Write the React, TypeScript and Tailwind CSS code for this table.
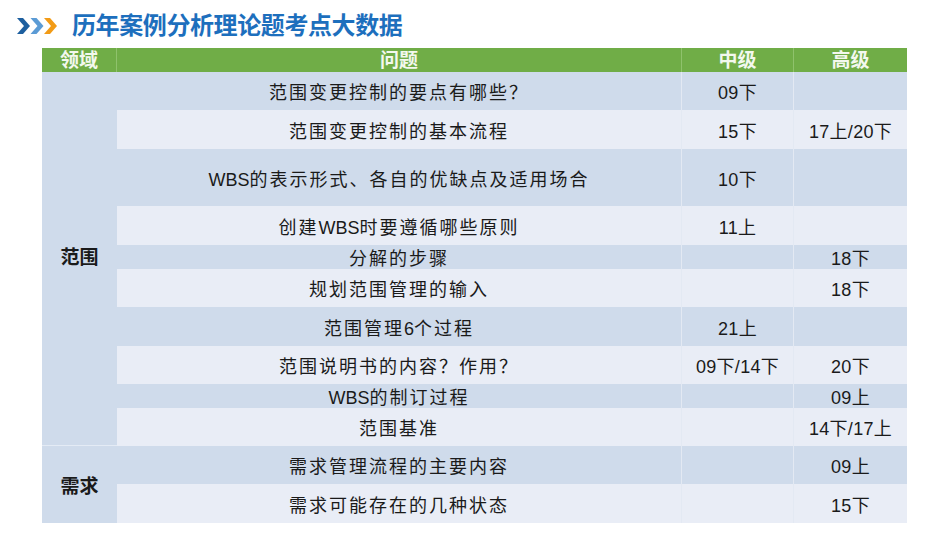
const rows: { q: string; mid: string; high: string; dark: boolean }[] = [
  { q: "范围变更控制的要点有哪些？", mid: "09下", high: "", dark: true },
  { q: "范围变更控制的基本流程", mid: "15下", high: "17上/20下", dark: false },
  { q: "WBS的表示形式、各自的优缺点及适用场合", mid: "10下", high: "", dark: true },
  { q: "创建WBS时要遵循哪些原则", mid: "11上", high: "", dark: false },
  { q: "分解的步骤", mid: "", high: "18下", dark: true },
  { q: "规划范围管理的输入", mid: "", high: "18下", dark: false },
  { q: "范围管理6个过程", mid: "21上", high: "", dark: true },
  { q: "范围说明书的内容？作用？", mid: "09下/14下", high: "20下", dark: false },
  { q: "WBS的制订过程", mid: "", high: "09上", dark: true },
  { q: "范围基准", mid: "", high: "14下/17上", dark: false },
  { q: "需求管理流程的主要内容", mid: "", high: "09上", dark: true },
  { q: "需求可能存在的几种状态", mid: "", high: "15下", dark: false },
];

// letter spacing only on the CJK runs, Latin stays tight
function Spaced({ text }: { text: string }) {
  const parts = text.split(/([A-Za-z0-9/]+)/).filter(Boolean);
  return (
    <>
      {parts.map((p, i) =>
        /[A-Za-z0-9]/.test(p) ? (
          <span key={i} className="tracking-normal">
            {p}
          </span>
        ) : (
          <span key={i} className="tracking-[2px]">
            {p}
          </span>
        )
      )}
    </>
  );
}

function Chevrons() {
  return (
    <svg width="40" height="16" viewBox="0 0 40 16">
      <polygon points="0,0 6,0 13,8 6,16 0,16 7,8" fill="#1d5f9f" />
      <polygon points="13.5,0 19.5,0 26.5,8 19.5,16 13.5,16 20.5,8" fill="#5b9bd5" />
      <polygon points="27,0 33,0 40,8 33,16 27,16 34,8" fill="#f29b16" />
    </svg>
  );
}

export default function App() {
  const font = { fontFamily: '"Liberation Sans", "Noto Sans CJK SC", sans-serif' };
  return (
    <div className="w-[950px] h-[535px] bg-white overflow-hidden" style={font}>
      <div className="flex items-center h-[48px] pl-[17px] pt-[4px]">
        <Chevrons />
        <h1 className="ml-[15px] text-[24px] font-bold text-[#1d6fbd] tracking-[-0.4px] leading-none">
          历年案例分析理论题考点大数据
        </h1>
      </div>
      <div className="ml-[42px] w-[865px] grid grid-cols-[75px_565px_112px_113px] grid-rows-[24px_38px_39px_57px_39px_24px_38px_39px_38px_24px_38px_38px_39px] text-[#1a1a1a]">
        <div className="bg-[#70ad47] text-[#f3f8ee] font-bold text-[19px] flex items-end justify-center leading-[22px] border-r border-[#8fc26c]">
          领域
        </div>
        <div className="bg-[#70ad47] text-[#f3f8ee] font-bold text-[19px] flex items-end justify-center leading-[22px] border-r border-[#8fc26c]">
          问题
        </div>
        <div className="bg-[#70ad47] text-[#f3f8ee] font-bold text-[19px] flex items-end justify-center leading-[22px] border-r border-[#8fc26c]">
          中级
        </div>
        <div className="bg-[#70ad47] text-[#f3f8ee] font-bold text-[19px] flex items-end justify-center leading-[22px]">
          高级
        </div>
        <div className="row-start-2 row-span-10 col-start-1 bg-[#cfdbeb] flex items-center justify-center font-bold text-[19px] border-b border-[#e4ebf5]">
          范围
        </div>
        <div className="row-start-12 row-span-2 col-start-1 bg-[#cfdbeb] flex items-center justify-center font-bold text-[19px] pt-[5px]">
          需求
        </div>
        {rows.map((r, i) => {
          const bg = r.dark ? "bg-[#cfdbeb]" : "bg-[#e9edf6]";
          return (
            <div key={i} className="contents">
              <div
                className={`${bg} col-start-2 flex items-center justify-center pt-[4px] text-[18px] leading-none border-r border-[#e3e9f3]`}
              >
                <Spaced text={r.q} />
              </div>
              <div
                className={`${bg} col-start-3 flex items-center justify-center pt-[4px] text-[18px] leading-none tracking-[0.3px] border-r border-[#e3e9f3]`}
              >
                {r.mid}
              </div>
              <div
                className={`${bg} col-start-4 flex items-center justify-center pt-[4px] text-[18px] leading-none tracking-[0.3px]`}
              >
                {r.high}
              </div>
            </div>
          );
        })}
      </div>
    </div>
  );
}
